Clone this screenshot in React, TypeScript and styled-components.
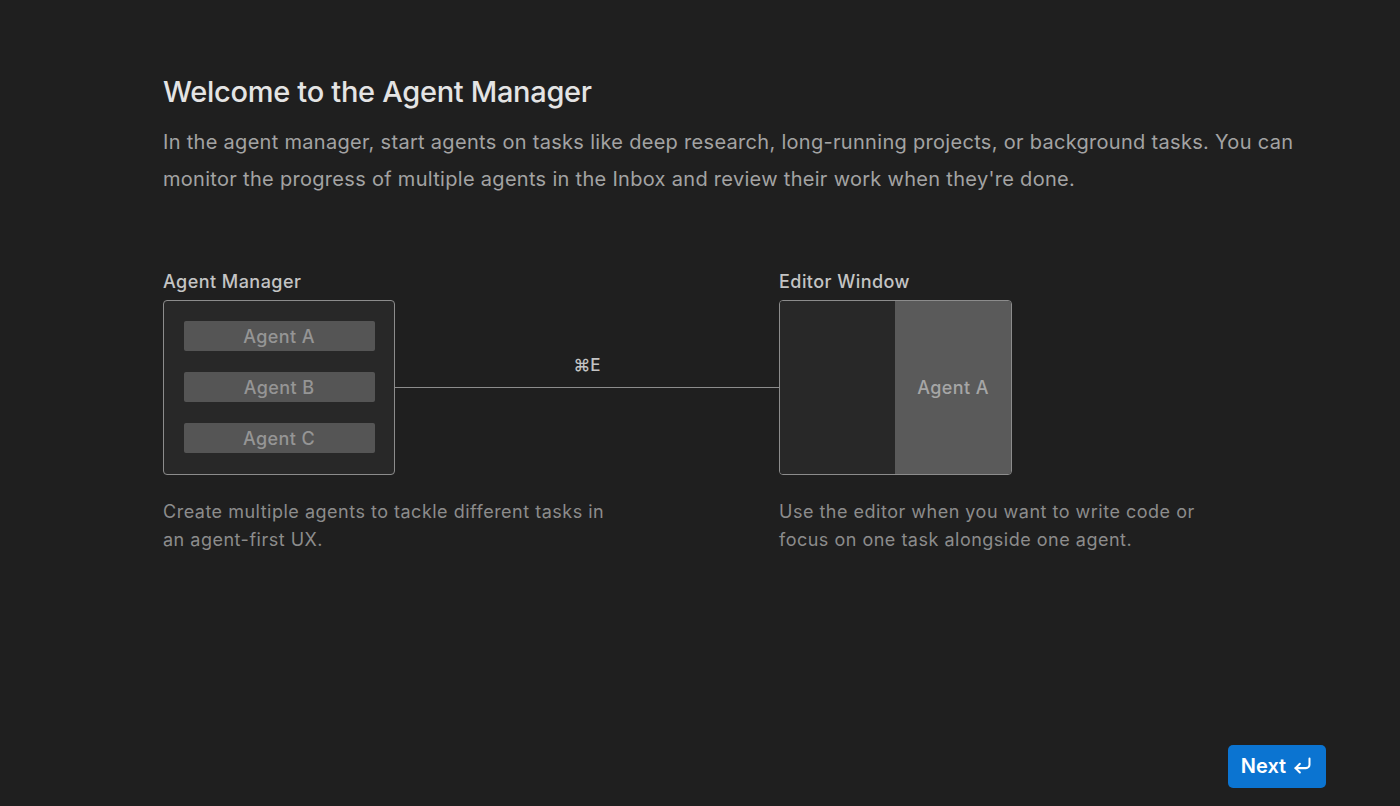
import React from "react";
import styled, { createGlobalStyle } from "styled-components";

const Global = createGlobalStyle`
  html, body { margin: 0; padding: 0; background: #1f1f1f; }
  body { font-family: Inter, "Noto Sans", sans-serif; -webkit-font-smoothing: antialiased; }
  * { box-sizing: border-box; }
`;

const Page = styled.div`
  min-height: 100vh;
  display: flex;
  flex-direction: column;
  padding: 74px 74px 18px 163px;
`;

const Title = styled.h1`
  margin: 0;
  font-size: 29px;
  line-height: 36px;
  font-weight: 500;
  color: #e4e4e4;
  letter-spacing: -0.3px;
`;

const Intro = styled.p`
  margin: 14px 0 0;
  max-width: 1150px;
  font-size: 20px;
  line-height: 37px;
  letter-spacing: 0.3px;
  color: #a3a3a3;
`;

const Diagram = styled.div`
  display: flex;
  margin-top: 73px;
`;

const Column = styled.div<{ $width: number }>`
  width: ${(p) => p.$width}px;
  display: flex;
  flex-direction: column;
`;

const Label = styled.div`
  font-size: 18px;
  line-height: 22px;
  font-weight: 500;
  letter-spacing: 0.45px;
  color: #c4c4c4;
  margin-bottom: 7px;
`;

const BoxRow = styled.div`
  display: flex;
  align-items: center;
`;

const Frame = styled.div`
  width: 232px;
  height: 175px;
  border: 1px solid #8c8c8c;
  border-radius: 4px;
  background: #282828;
  overflow: hidden;
  flex-shrink: 0;
`;

const AgentList = styled(Frame)`
  display: flex;
  flex-direction: column;
  align-items: center;
  gap: 21px;
  padding-top: 20px;
`;

const AgentChip = styled.div`
  width: 191px;
  height: 30px;
  background: #555555;
  border-radius: 2px;
  display: flex;
  align-items: center;
  justify-content: center;
  font-size: 18px;
  font-weight: 500;
  letter-spacing: 0.4px;
  color: #959595;
`;

const Connector = styled.div`
  flex: 1;
  position: relative;
  height: 1px;
  background: #8c8c8c;
`;

const Shortcut = styled.span`
  position: absolute;
  left: 50%;
  bottom: 13px;
  transform: translateX(-50%);
  font-size: 17px;
  font-weight: 500;
  color: #c4c4c4;
  white-space: nowrap;
`;

const EditorFrame = styled(Frame)`
  width: 233px;
  display: grid;
  grid-template-columns: 115px 1fr;
`;

const EditorPane = styled.div<{ $agent?: boolean }>`
  background: ${(p) => (p.$agent ? "#5a5a5a" : "#282828")};
  display: flex;
  align-items: center;
  justify-content: center;
  font-size: 18px;
  font-weight: 500;
  letter-spacing: 0.4px;
  color: #a6a6a6;
`;

const Description = styled.p<{ $max: number }>`
  margin: 23px 0 0;
  max-width: ${(p) => p.$max}px;
  font-size: 18px;
  line-height: 28px;
  letter-spacing: 0.5px;
  color: #8c8c8c;
`;

const Footer = styled.div`
  margin-top: auto;
  display: flex;
  justify-content: flex-end;
`;

const NextButton = styled.button`
  width: 98px;
  height: 43px;
  border: none;
  border-radius: 5px;
  background: #0b74d1;
  color: #ffffff;
  font-family: inherit;
  font-size: 20px;
  font-weight: 600;
  display: flex;
  align-items: center;
  justify-content: center;
  gap: 6px;
  padding: 0 0 2px;
  cursor: pointer;
`;

const ReturnIcon = () => (
  <svg width="21" height="21" viewBox="0 0 24 24" fill="none" stroke="currentColor" strokeWidth="2.3" strokeLinecap="round" strokeLinejoin="round">
    <path d="M20 4v7a4 4 0 0 1-4 4H4" />
    <path d="m9 10-5 5 5 5" />
  </svg>
);

export default function App() {
  return (
    <Page>
      <Global />
      <Title>Welcome to the Agent Manager</Title>
      <Intro>
        In the agent manager, start agents on tasks like deep research, long-running projects, or background tasks. You can
        monitor the progress of multiple agents in the Inbox and review their work when they're done.
      </Intro>
      <Diagram>
        <Column $width={616}>
          <Label>Agent Manager</Label>
          <BoxRow>
            <AgentList>
              <AgentChip>Agent A</AgentChip>
              <AgentChip>Agent B</AgentChip>
              <AgentChip>Agent C</AgentChip>
            </AgentList>
            <Connector>
              <Shortcut>⌘E</Shortcut>
            </Connector>
          </BoxRow>
          <Description $max={460}>
            Create multiple agents to tackle different tasks in an agent-first UX.
          </Description>
        </Column>
        <Column $width={460}>
          <Label>Editor Window</Label>
          <EditorFrame>
            <EditorPane />
            <EditorPane $agent>Agent A</EditorPane>
          </EditorFrame>
          <Description $max={430}>
            Use the editor when you want to write code or focus on one task alongside one agent.
          </Description>
        </Column>
      </Diagram>
      <Footer>
        <NextButton>
          Next <ReturnIcon />
        </NextButton>
      </Footer>
    </Page>
  );
}
